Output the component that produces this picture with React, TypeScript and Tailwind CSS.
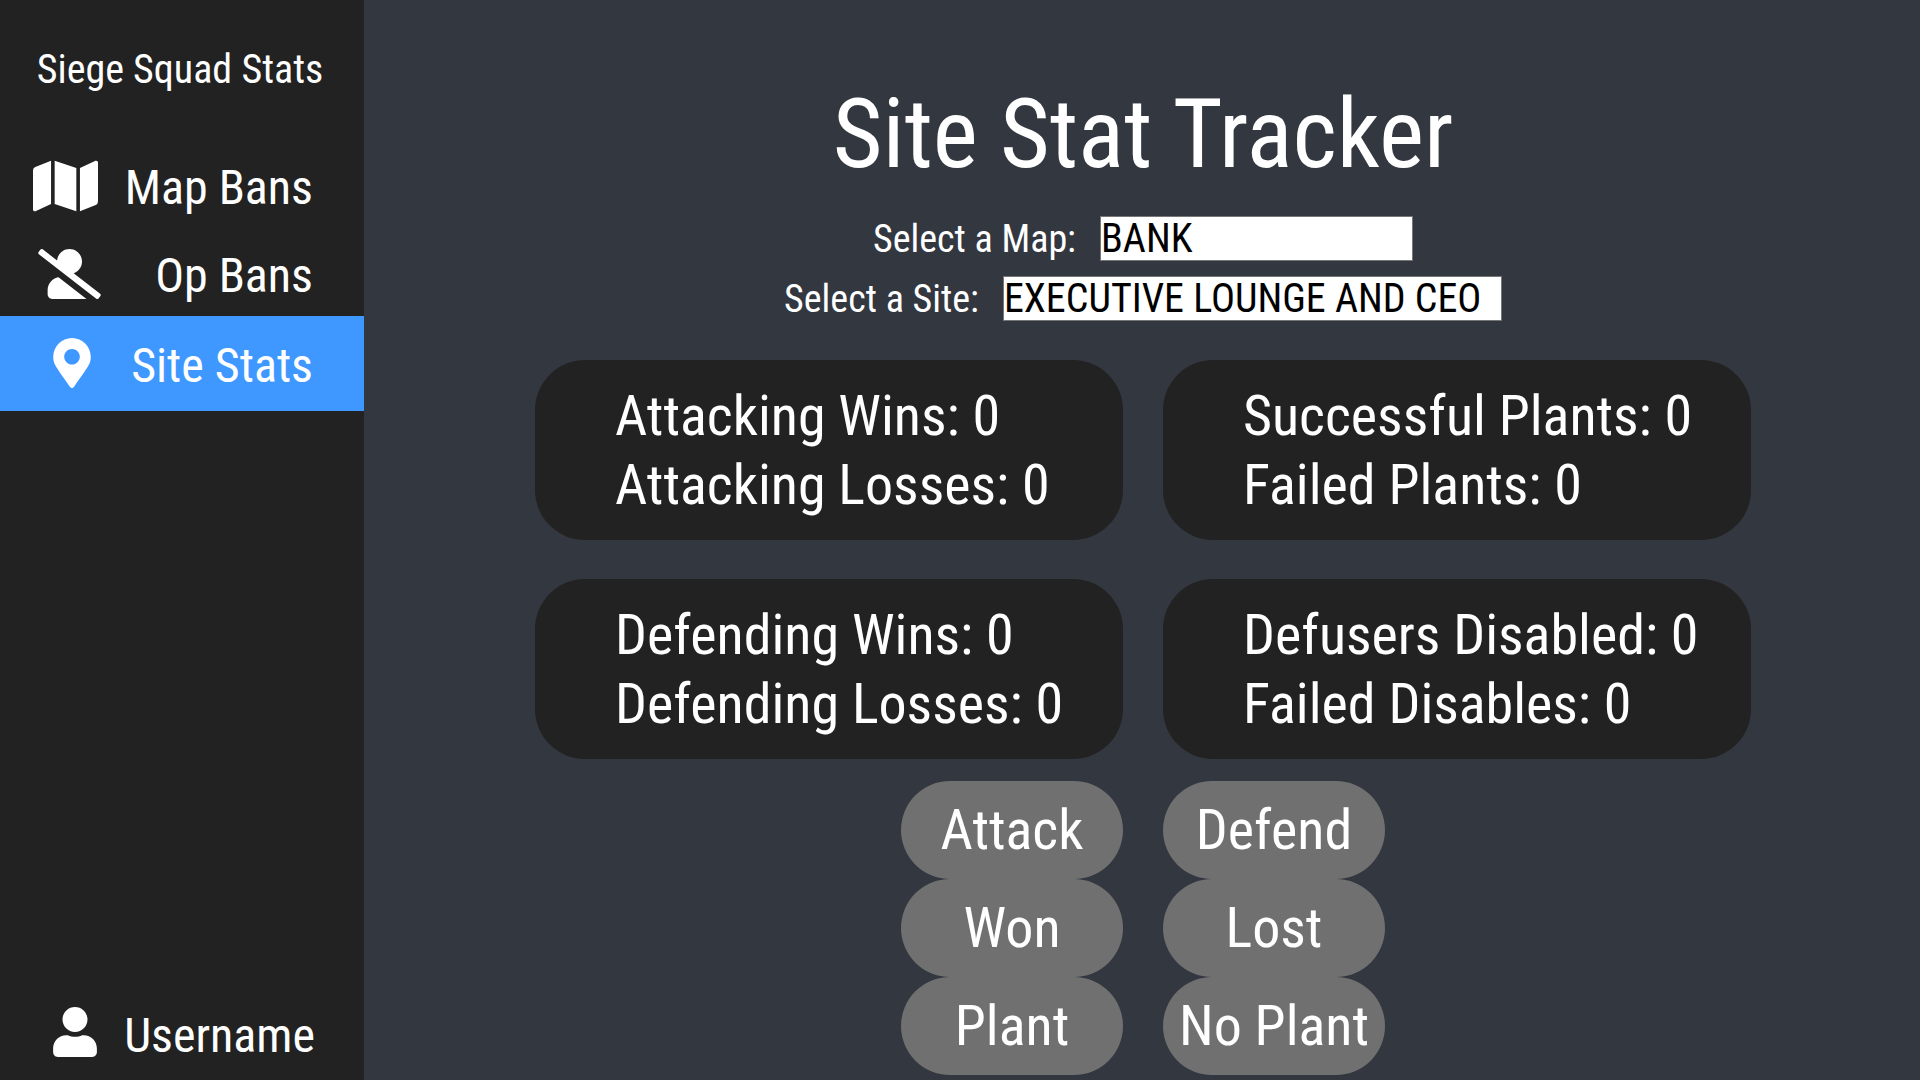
import { useState } from "react";
import type { IconType } from "react-icons";
import { FaMap, FaMapMarkerAlt, FaUser, FaUserSlash } from "react-icons/fa";

type NavItem = {
  label: string;
  Icon: IconType;
  iconClass: string;
  rowClass: string;
};

const navItems: NavItem[] = [
  { label: "Map Bans", Icon: FaMap, iconClass: "h-[58px] w-[65px]", rowClass: "h-22 pl-[33px]" },
  { label: "Op Bans", Icon: FaUserSlash, iconClass: "h-[50px] w-[63px]", rowClass: "h-22 pl-[38px]" },
  {
    label: "Site Stats",
    Icon: FaMapMarkerAlt,
    iconClass: "h-[50px] w-[38px]",
    rowClass: "h-[95px] bg-[#3e98ff] pb-1 pl-[53px]",
  },
];

const cards: string[][] = [
  ["Attacking Wins", "Attacking Losses"],
  ["Successful Plants", "Failed Plants"],
  ["Defending Wins", "Defending Losses"],
  ["Defusers Disabled", "Failed Disables"],
];

const actions = ["Attack", "Defend", "Won", "Lost", "Plant", "No Plant"];

function Sidebar() {
  return (
    <aside className="flex w-[364px] shrink-0 flex-col bg-[#222222]">
      <p className="mt-10 mb-10 pr-1 text-center text-[40px] leading-[60px]">Siege Squad Stats</p>
      <nav>
        {navItems.map(({ label, Icon, iconClass, rowClass }) => (
          <a
            key={label}
            href="#"
            className={`flex items-center justify-between pt-[3px] pr-[51px] text-[48px] leading-[60px] ${rowClass}`}
          >
            <Icon className={iconClass} />
            <span className="pt-[5px]">{label}</span>
          </a>
        ))}
      </nav>
      <a
        href="#"
        className="mt-auto flex h-24 items-center justify-between pr-[49px] pl-[53px] text-[48px] leading-[60px]"
      >
        <FaUser className="h-[50px] w-[44px]" />
        <span className="pt-[7px]">Username</span>
      </a>
    </aside>
  );
}

type FieldProps = { id: string; label: string; value: string; selectClass: string };

function Field({ id, label, value, selectClass }: FieldProps) {
  return (
    <div className="flex items-center gap-6">
      <label htmlFor={id} className="pt-[2px] text-[38px] leading-[43px]">
        {label}
      </label>
      <select
        id={id}
        defaultValue={value}
        className={`h-[45px] appearance-none border border-[#767676] bg-white p-0 text-[40px] leading-[43px] text-black ${selectClass}`}
      >
        <option>{value}</option>
      </select>
    </div>
  );
}

export default function App() {
  const [, setLast] = useState("");
  return (
    <div className="flex min-h-screen bg-[#333740] font-['Roboto_Condensed','Liberation_Sans',sans-serif] text-white">
      <Sidebar />
      <main className="flex flex-1 flex-col items-center pt-[65px] pl-[2px]">
        <h1 className="text-[96px] leading-[138px]">Site Stat Tracker</h1>
        <form className="mt-[13px] flex flex-col items-center gap-[15px]">
          <Field id="map" label="Select a Map:" value="BANK" selectClass="w-[313px]" />
          <Field id="site" label="Select a Site:" value="EXECUTIVE LOUNGE AND CEO" selectClass="w-[499px]" />
        </form>
        <section className="mt-[39px] grid grid-cols-[588px_588px] gap-x-10 gap-y-[39px]">
          {cards.map((lines) => (
            <div key={lines[0]} className="rounded-[50px] bg-[#222222] pt-[22px] pb-5 pl-20">
              {lines.map((line) => (
                <p key={line} className="text-[56px] leading-[69px]">
                  {line}: 0
                </p>
              ))}
            </div>
          ))}
        </section>
        <section className="mt-[22px] grid grid-cols-[222px_222px] gap-x-10">
          {actions.map((action) => (
            <button
              key={action}
              type="button"
              onClick={() => setLast(action)}
              className="h-[98px] rounded-[50px] bg-[#707070] text-[56px] leading-[69px]"
            >
              {action}
            </button>
          ))}
        </section>
      </main>
    </div>
  );
}
